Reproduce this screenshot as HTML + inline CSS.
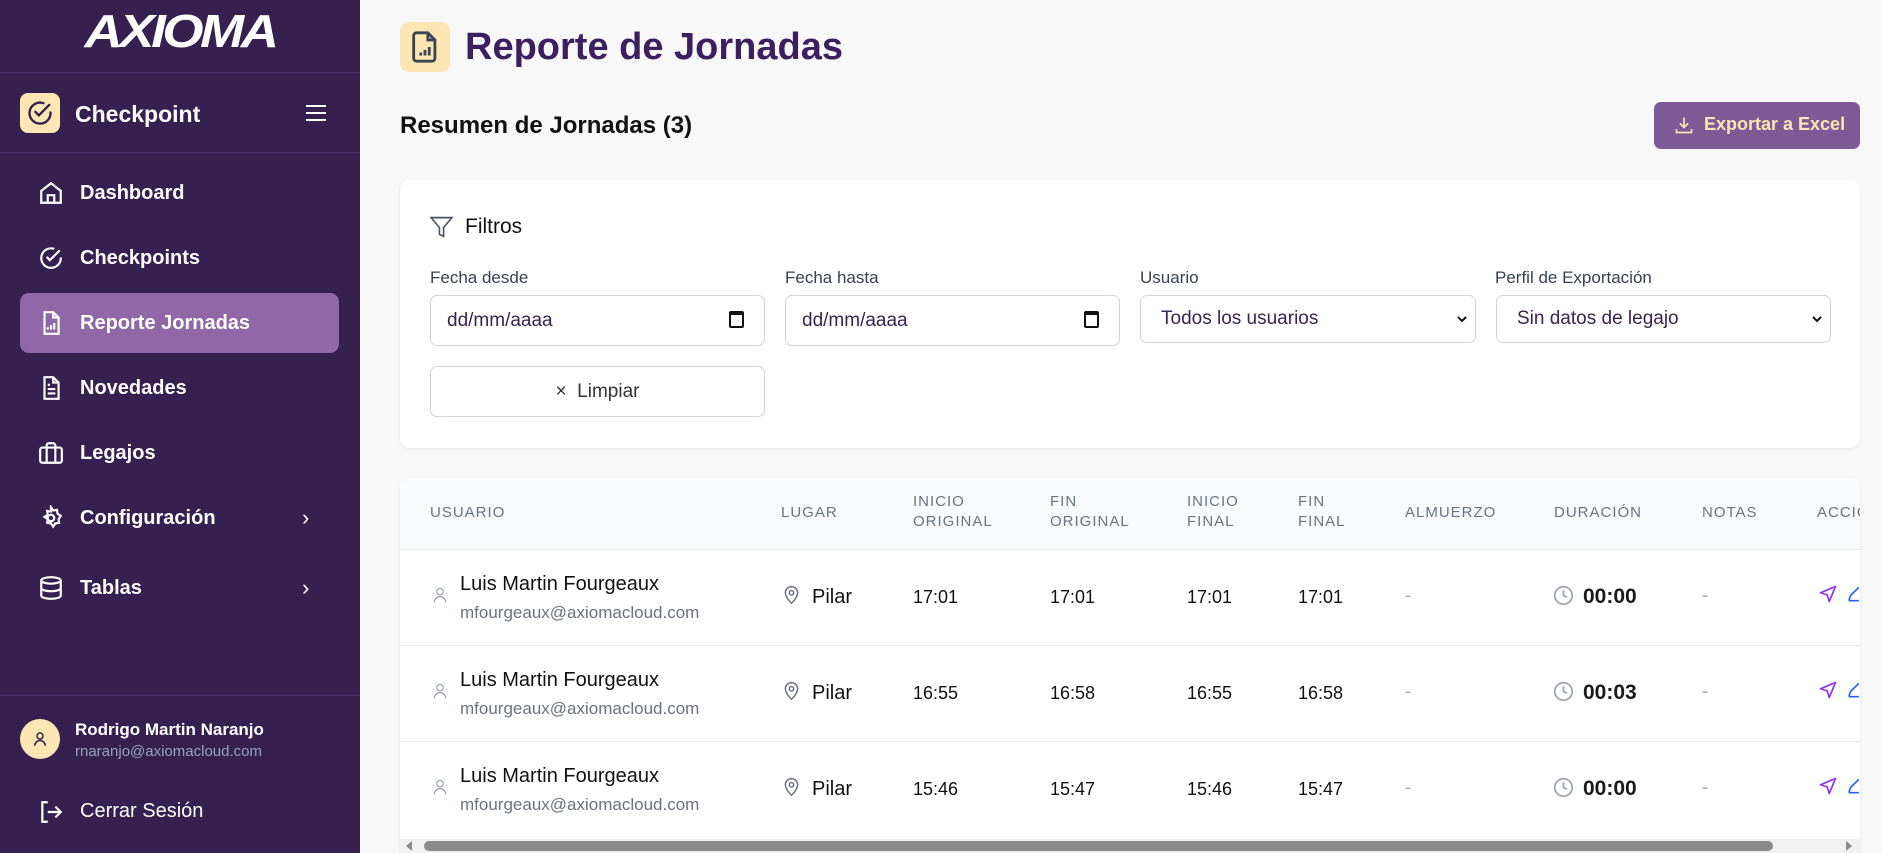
<!DOCTYPE html>
<html><head><meta charset="utf-8"><style>
*{box-sizing:border-box;margin:0;padding:0}
body{width:1882px;height:853px;overflow:hidden;background:#f8f8f9;font-family:"Liberation Sans",sans-serif;position:relative}
.a{position:absolute}
.sb{left:0;top:0;width:360px;height:853px;background:#352050}
.nav{position:absolute;left:80px;color:#fff;font-size:20px;font-weight:bold}
.ic{position:absolute;left:38px;width:26px;height:26px}
.lbl{position:absolute;font-size:17px;color:#374151}
.inp{position:absolute;height:51px;border:1px solid #d1d5db;border-radius:7px;background:#fff;font-size:19px;color:#3b2350;padding-left:20px;line-height:49px}
.th{position:absolute;font-size:15px;color:#6b7280;letter-spacing:1px;line-height:20px}
.td{position:absolute;font-size:18px;color:#111}
.nm{position:absolute;font-size:20px;color:#111}
.em{position:absolute;font-size:17px;color:#6b7280}
.hr{position:absolute;left:400px;width:1460px;height:1px;background:#e5e7eb}
</style></head><body>
<div class="a sb"></div>
<div class="a" style="left:0;top:0;width:360px;text-align:center;top:4px;font-size:46px;font-weight:bold;font-style:italic;color:#fff;letter-spacing:-3px;transform:scaleX(1.15)">AXIOMA</div>
<div class="a" style="left:0;top:72px;width:360px;height:1px;background:#4a3168"></div>
<div class="a" style="left:20px;top:93px;width:40px;height:40px;border-radius:8px;background:#fce6b4"></div>
<svg class="a" style="left:26px;top:99px" width="28" height="28" viewBox="0 0 24 24" fill="none" stroke="#352050" stroke-width="2" stroke-linecap="round"><path d="M21 11.5A9 9 0 1 1 15 3.6"/><path d="M8 11l3 3 9-9"/></svg>
<div class="a" style="left:75px;top:101px;font-size:23px;font-weight:bold;color:#fff">Checkpoint</div>
<svg class="a" style="left:305px;top:103px" width="22" height="20" viewBox="0 0 22 20" stroke="#fff" stroke-width="2"><path d="M1 3h20M1 10h20M1 17h20"/></svg>
<div class="a" style="left:0;top:152px;width:360px;height:1px;background:#4a3168"></div>
<div class="a" style="left:20px;top:293px;width:319px;height:60px;border-radius:9px;background:#9068a8"></div>
<svg class="ic" style="top:180px" viewBox="0 0 24 24" fill="none" stroke="#fff" stroke-width="2"><path d="M3 10l9-7 9 7v11H3z"/><path d="M9 21v-7h6v7"/></svg>
<div class="nav" style="top:182px">Dashboard</div>
<svg class="ic" style="top:245px" viewBox="0 0 24 24" fill="none" stroke="#fff" stroke-width="2"><path d="M21 11.5A9 9 0 1 1 15 3.6"/><path d="M8 11l3 3 9-9"/></svg>
<div class="nav" style="top:247px">Checkpoints</div>
<svg class="ic" style="top:310px" viewBox="0 0 24 24" fill="none" stroke="#fff" stroke-width="2"><path d="M14 2H6v20h13V7z"/><path d="M14 2v5h5M9 18v-2M12 18v-4M15 18v-6"/></svg>
<div class="nav" style="top:312px">Reporte Jornadas</div>
<svg class="ic" style="top:375px" viewBox="0 0 24 24" fill="none" stroke="#fff" stroke-width="2"><path d="M14 2H6v20h13V7z"/><path d="M14 2v5h5M9 13h7M9 17h7M9 9h2"/></svg>
<div class="nav" style="top:377px">Novedades</div>
<svg class="ic" style="top:440px" viewBox="0 0 24 24" fill="none" stroke="#fff" stroke-width="2"><rect x="2" y="7" width="20" height="14" rx="2"/><path d="M16 21V5a2 2 0 0 0-2-2h-4a2 2 0 0 0-2 2v16"/></svg>
<div class="nav" style="top:442px">Legajos</div>
<svg class="ic" style="top:505px" viewBox="0 0 24 24" fill="none" stroke="#fff" stroke-width="2"><circle cx="12" cy="12" r="3"/><path d="M12 2l2 3 3.5-.5.5 3.5 3 2-2 3 .5 3.5-3.5.5-2 3-2-3-3.5-.5.5-3.5-3-2 3-2-.5-3.5 3.5.5z"/></svg>
<div class="nav" style="top:507px">Configuración</div>
<div class="a" style="left:302px;top:505px;color:#fff;font-size:22px">›</div>
<svg class="ic" style="top:575px" viewBox="0 0 24 24" fill="none" stroke="#fff" stroke-width="2"><ellipse cx="12" cy="5" rx="9" ry="3"/><path d="M3 5v14c0 1.7 4 3 9 3s9-1.3 9-3V5M3 12c0 1.7 4 3 9 3s9-1.3 9-3"/></svg>
<div class="nav" style="top:577px">Tablas</div>
<div class="a" style="left:302px;top:575px;color:#fff;font-size:22px">›</div>
<div class="a" style="left:0;top:695px;width:360px;height:1px;background:#4a3168"></div>
<div class="a" style="left:20px;top:719px;width:40px;height:40px;border-radius:50%;background:#fce6b4"></div>
<svg class="a" style="left:31px;top:730px" width="18" height="18" viewBox="0 0 24 24" fill="none" stroke="#352050" stroke-width="2"><circle cx="12" cy="8" r="4"/><path d="M5 21a7 7 0 0 1 14 0"/></svg>
<div class="a" style="left:75px;top:720px;font-size:17px;font-weight:bold;color:#fff">Rodrigo Martin Naranjo</div>
<div class="a" style="left:75px;top:743px;font-size:15px;color:#94a3c0">rnaranjo@axiomacloud.com</div>
<svg class="ic" style="top:799px" viewBox="0 0 24 24" fill="none" stroke="#fff" stroke-width="2"><path d="M9 3H4v18h5M16 7l5 5-5 5M21 12H9"/></svg>
<div class="nav" style="top:800px;font-weight:normal">Cerrar Sesión</div>

<div class="a" style="left:400px;top:22px;width:50px;height:50px;border-radius:9px;background:#fce6b4"></div>
<svg class="a" style="left:408px;top:29px" width="34" height="36" viewBox="0 0 24 24" fill="none" stroke="#3d4451" stroke-width="2"><path d="M14 2H6a2 2 0 0 0-2 2v16a2 2 0 0 0 2 2h11a2 2 0 0 0 2-2V7z"/><path d="M14 2v5h5M9 18v-2M12 18v-4M15 18v-6"/></svg>
<div class="a" style="left:465px;top:26px;font-size:38px;font-weight:bold;color:#3b1f5e">Reporte de Jornadas</div>
<div class="a" style="left:400px;top:112px;font-size:24px;font-weight:bold;color:#111">Resumen de Jornadas (3)</div>
<div class="a" style="left:1654px;top:102px;width:206px;height:47px;border-radius:7px;background:#7d5a96"></div>
<svg class="a" style="left:1674px;top:115px" width="20" height="20" viewBox="0 0 24 24" fill="none" stroke="#fce6b4" stroke-width="2"><path d="M12 3v12M7 10l5 5 5-5M3 17v4h18v-4"/></svg>
<div class="a" style="left:1704px;top:114px;font-size:18px;font-weight:bold;color:#fce6b4">Exportar a Excel</div>

<div class="a" style="left:400px;top:180px;width:1460px;height:268px;background:#fff;border-radius:10px;box-shadow:0 1px 3px rgba(0,0,0,.08)"></div>
<svg class="a" style="left:429px;top:214px" width="25" height="26" viewBox="0 0 24 24" fill="none" stroke="#4b5563" stroke-width="1.6"><path d="M2 3h20l-8 9.5V21l-4-2v-6.5z"/></svg>
<div class="a" style="left:465px;top:215px;font-size:21px;color:#111">Filtros</div>
<div class="lbl" style="left:430px;top:268px">Fecha desde</div>
<div class="lbl" style="left:785px;top:268px">Fecha hasta</div>
<div class="lbl" style="left:1140px;top:268px">Usuario</div>
<div class="lbl" style="left:1495px;top:268px">Perfil de Exportación</div>
<div class="inp" style="left:430px;top:295px;width:335px;padding-left:16px">dd/mm/aaaa</div>
<div class="a" style="left:729px;top:311px;width:15px;height:17px;border:2px solid #111;border-top-width:4px;border-radius:2px"></div>
<div class="inp" style="left:785px;top:295px;width:335px;padding-left:16px">dd/mm/aaaa</div>
<div class="a" style="left:1084px;top:311px;width:15px;height:17px;border:2px solid #111;border-top-width:4px;border-radius:2px"></div>
<div class="inp" style="left:1140px;top:295px;width:336px;height:48px;line-height:46px">Todos los usuarios</div>
<svg class="a" style="left:1456px;top:313px" width="12" height="12" viewBox="0 0 12 12" fill="none" stroke="#111" stroke-width="2"><path d="M2 4l4 4 4-4"/></svg>
<div class="inp" style="left:1496px;top:295px;width:335px;height:48px;line-height:46px">Sin datos de legajo</div>
<svg class="a" style="left:1811px;top:313px" width="12" height="12" viewBox="0 0 12 12" fill="none" stroke="#111" stroke-width="2"><path d="M2 4l4 4 4-4"/></svg>
<div class="inp" style="left:430px;top:366px;width:335px;padding:0;text-align:center;color:#333">× &nbsp;Limpiar</div>

<div class="a" style="left:400px;top:478px;width:1460px;height:375px;background:#fff;border-radius:10px 10px 0 0;box-shadow:0 1px 3px rgba(0,0,0,.08);overflow:hidden"><div style="height:71px;background:#f8fafc"></div></div>
<div class="hr" style="top:549px"></div>
<div class="hr" style="top:645px"></div>
<div class="hr" style="top:741px"></div>
<div class="th" style="left:430px;top:503px">USUARIO</div>
<div class="th" style="left:781px;top:503px">LUGAR</div>
<div class="th" style="left:913px;top:492px">INICIO<br>ORIGINAL</div>
<div class="th" style="left:1050px;top:492px">FIN<br>ORIGINAL</div>
<div class="th" style="left:1187px;top:492px">INICIO<br>FINAL</div>
<div class="th" style="left:1298px;top:492px">FIN<br>FINAL</div>
<div class="th" style="left:1405px;top:503px">ALMUERZO</div>
<div class="th" style="left:1554px;top:503px">DURACIÓN</div>
<div class="th" style="left:1702px;top:503px">NOTAS</div>
<div class="th" style="left:1817px;top:503px;width:43px;overflow:hidden;white-space:nowrap">ACCIONES</div>

<div id="rows"></div>
<div class="a" style="left:400px;top:839px;width:1460px;height:14px;background:#f1f1f1"></div>
<div class="a" style="left:424px;top:841px;width:1349px;height:10px;border-radius:5px;background:#8a8a8a"></div>
<div class="a" style="left:406px;top:841px;width:0;height:0;border:5px solid transparent;border-right:6px solid #8a8a8a;border-left:0"></div>
<div class="a" style="left:1846px;top:841px;width:0;height:0;border:5px solid transparent;border-left:6px solid #8a8a8a;border-right:0"></div>

<script>
var d=[["17:01","17:01","17:01","17:01","00:00"],["16:55","16:58","16:55","16:58","00:03"],["15:46","15:47","15:46","15:47","00:00"]];
var h="";
d.forEach(function(r,i){var t=549+i*96;
h+='<svg class="a" style="left:430px;top:'+(t+35)+'px" width="20" height="22" viewBox="0 0 24 24" fill="none" stroke="#9ca3af" stroke-width="1.5"><circle cx="12" cy="8" r="4"/><path d="M5 21a7 7 0 0 1 14 0"/></svg>';
h+='<div class="nm" style="left:460px;top:'+(t+24)+'px">Luis Martin Fourgeaux</div>';
h+='<div class="em" style="left:460px;top:'+(t+54)+'px">mfourgeaux@axiomacloud.com</div>';
h+='<svg class="a" style="left:781px;top:'+(t+34)+'px" width="21" height="23" viewBox="0 0 24 24" fill="none" stroke="#6b7280" stroke-width="1.7"><path d="M12 22s7-6.5 7-12a7 7 0 0 0-14 0c0 5.5 7 12 7 12z"/><circle cx="12" cy="10" r="2.5"/></svg>';
h+='<div class="nm" style="left:812px;top:'+(t+37)+'px">Pilar</div>';
[913,1050,1187,1298].forEach(function(x,j){h+='<div class="td" style="left:'+x+'px;top:'+(t+38)+'px">'+r[j]+'</div>';});
h+='<div class="td" style="left:1405px;top:'+(t+36)+'px;color:#9ca3af">-</div>';
h+='<svg class="a" style="left:1553px;top:'+(t+36)+'px" width="21" height="21" viewBox="0 0 24 24" fill="none" stroke="#9ca3af" stroke-width="2"><circle cx="12" cy="12" r="10"/><path d="M12 6v6l4 2"/></svg>';
h+='<div class="nm" style="left:1583px;top:'+(t+36)+'px;font-size:21px;font-weight:bold;color:#1a1a1a">'+r[4]+'</div>';
h+='<div class="td" style="left:1702px;top:'+(t+36)+'px;color:#9ca3af">-</div>';
h+='<svg class="a" style="left:1818px;top:'+(t+35)+'px" width="20" height="20" viewBox="0 0 24 24" fill="none" stroke="#9333ea" stroke-width="2" stroke-linejoin="round"><path d="M21 3L3 10.5l8 2.5 2.5 8z"/></svg>';
h+='<svg class="a" style="left:1846px;top:'+(t+35)+'px" width="14" height="20" viewBox="0 0 14 24" fill="none" stroke="#2563eb" stroke-width="2"><path d="M2 20l2-6 10-10M2 20h12"/></svg>';
});
document.getElementById("rows").outerHTML=h;
</script>
</body></html>
